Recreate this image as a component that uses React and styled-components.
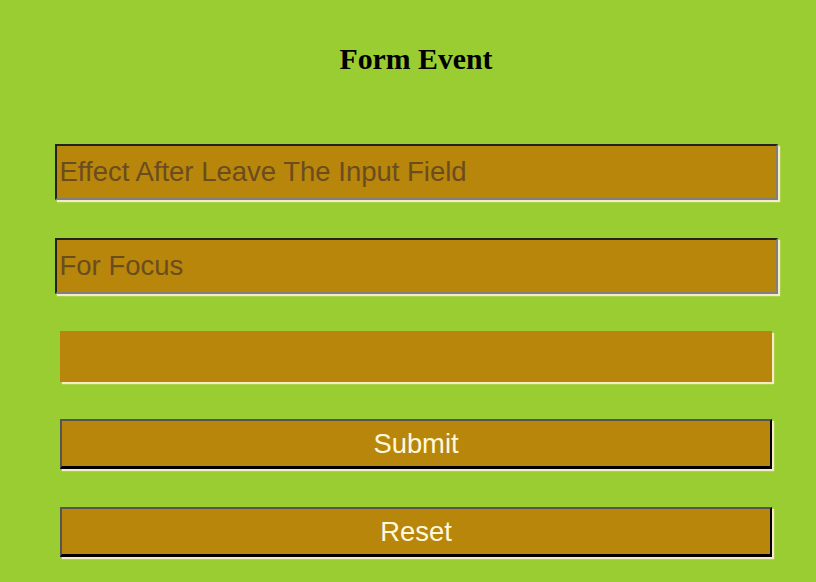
import React from "react";
import styled, { createGlobalStyle } from "styled-components";

const Global = createGlobalStyle`
  html, body { margin: 0; padding: 0; background: #9acd32; }
  body { width: 816px; height: 582px; overflow: hidden; }
`;

const Page = styled.div`
  box-sizing: border-box;
  width: 816px;
  padding: 42px 0 0 16px;
  display: flex;
  flex-direction: column;
  align-items: center;
`;

const Title = styled.h2`
  margin: 0;
  font-family: "Liberation Serif", "Times New Roman", serif;
  font-weight: bold;
  font-size: 29.8px;
  line-height: 34px;
  color: #000;
`;

const Form = styled.form`
  display: flex;
  flex-direction: column;
  align-items: center;
  margin-top: 68px;
`;

const TextInput = styled.input`
  box-sizing: border-box;
  display: block;
  margin: ${(p) => p.$mt || 0}px 0 0 0;
  width: ${(p) => (p.$plain ? 712 : 723)}px;
  height: ${(p) => (p.$plain ? 51 : 56)}px;
  padding: 0 2px 0 3px;
  background: #b8860b;
  border-style: solid;
  border-width: ${(p) => (p.$plain ? 0 : 2)}px;
  border-color: #222 #808080 #808080 #222;
  box-shadow: 2px 2px 1px #f6ebc9;
  font-family: "Liberation Sans", Arial, sans-serif;
  font-size: 27.5px;
  color: #6b4c1f;
  outline: none;
  &::placeholder { color: #6b4c1f; opacity: 1; }
`;

const Button = styled.button`
  box-sizing: border-box;
  display: block;
  margin: ${(p) => p.$mt || 0}px 0 0 0;
  width: 712px;
  height: 50px;
  padding: 0;
  background: #b8860b;
  border-style: solid;
  border-width: 2px 2px 3px 2px;
  border-color: #555 #000 #000 #555;
  box-shadow: 2px 2px 1px #f6ebc9;
  font-family: "Liberation Sans", Arial, sans-serif;
  font-size: 27.4px;
  color: #fff8dc;
  cursor: pointer;
`;

export default function App() {
  return (
    <>
      <Global />
      <Page>
        <Title>Form Event</Title>
        <Form onSubmit={(e) => e.preventDefault()}>
          <TextInput type="text" placeholder="Effect After Leave The Input Field" />
          <TextInput $mt={38} type="text" placeholder="For Focus" />
          <TextInput $mt={37} $plain type="text" />
          <Button $mt={37} type="submit">Submit</Button>
          <Button $mt={38} type="reset">Reset</Button>
        </Form>
      </Page>
    </>
  );
}
